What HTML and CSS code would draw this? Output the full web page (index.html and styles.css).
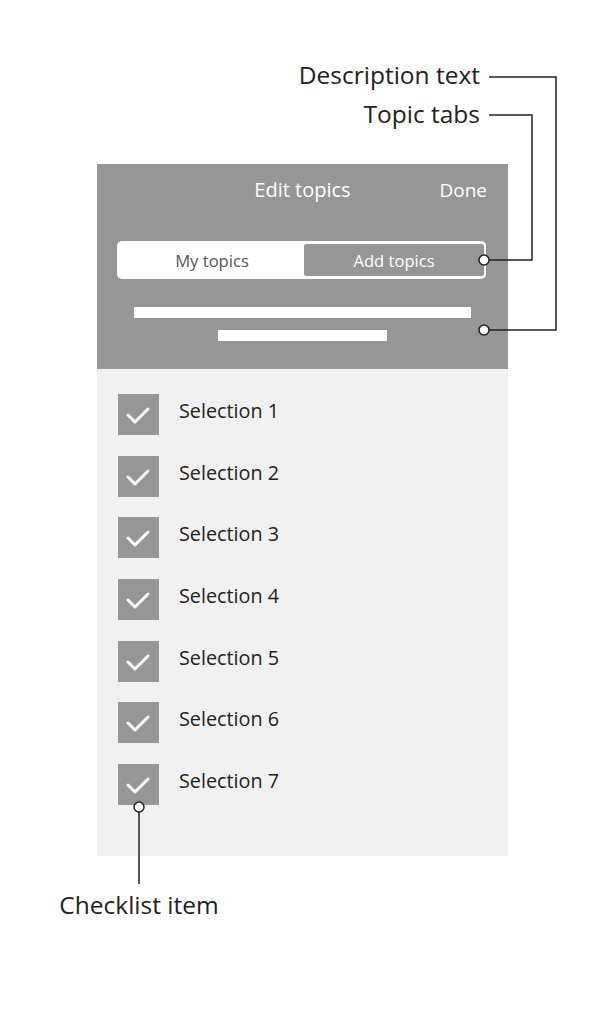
FILE: index.html
```html
<!DOCTYPE html>
<html lang="en">
<head>
<meta charset="utf-8">
<title>Edit topics</title>
<link rel="stylesheet" href="styles.css">
</head>
<body>
<div class="page">
  <div class="notes-top">
    <div class="note">Description text</div>
    <div class="note">Topic tabs</div>
  </div>

  <div class="phone">
    <div class="header">
      <div class="titlebar">
        <span></span>
        <span class="title">Edit topics</span>
        <span class="done">Done</span>
      </div>
      <div class="tabs">
        <div class="tab">My topics</div>
        <div class="tab active">Add topics</div>
      </div>
      <div class="desc">
        <div class="bar bar-long"></div>
        <div class="bar bar-short"></div>
      </div>
    </div>
    <div class="list">
      <div class="item"><span class="box"><svg viewBox="0 0 41 41"><path d="M10 21 L17 28 L30 15"/></svg></span><span class="label">Selection 1</span></div>
      <div class="item"><span class="box"><svg viewBox="0 0 41 41"><path d="M10 21 L17 28 L30 15"/></svg></span><span class="label">Selection 2</span></div>
      <div class="item"><span class="box"><svg viewBox="0 0 41 41"><path d="M10 21 L17 28 L30 15"/></svg></span><span class="label">Selection 3</span></div>
      <div class="item"><span class="box"><svg viewBox="0 0 41 41"><path d="M10 21 L17 28 L30 15"/></svg></span><span class="label">Selection 4</span></div>
      <div class="item"><span class="box"><svg viewBox="0 0 41 41"><path d="M10 21 L17 28 L30 15"/></svg></span><span class="label">Selection 5</span></div>
      <div class="item"><span class="box"><svg viewBox="0 0 41 41"><path d="M10 21 L17 28 L30 15"/></svg></span><span class="label">Selection 6</span></div>
      <div class="item"><span class="box"><svg viewBox="0 0 41 41"><path d="M10 21 L17 28 L30 15"/></svg></span><span class="label">Selection 7</span></div>
    </div>
  </div>

  <div class="note-bottom">Checklist item</div>

  <svg class="callouts" width="608" height="1018" viewBox="0 0 608 1018">
    <polyline points="489,77 556,77 556,330 489,330"/>
    <polyline points="489,115 532,115 532,260 489,260"/>
    <line x1="139" y1="812" x2="139" y2="884"/>
    <circle cx="484" cy="330" r="5"/>
    <circle cx="484" cy="260" r="5"/>
    <circle cx="139" cy="807" r="5"/>
  </svg>
</div>
</body>
</html>
```

FILE: styles.css
```css
* { box-sizing: border-box; }

html, body {
  margin: 0;
  padding: 0;
  background: #ffffff;
}

body {
  font-family: "Open Sans", "Noto Sans", "Liberation Sans", sans-serif;
  color: #222222;
}

.page {
  position: relative;
  width: 608px;
  height: 1018px;
  overflow: hidden;
}

.notes-top {
  padding-top: 59px;
  width: 480px;
  display: flex;
  flex-direction: column;
  align-items: flex-end;
  gap: 8px;
}

.note {
  font-size: 24.5px;
  line-height: 31px;
  color: #222222;
}

.phone {
  margin-top: 35px;
  margin-left: 97px;
  width: 411px;
}

.header {
  background: #969696;
  height: 205px;
}

.titlebar {
  height: 52px;
  display: grid;
  grid-template-columns: 1fr auto 1fr;
  align-items: center;
  color: #ffffff;
  padding: 0 21px;
}

.title {
  font-size: 20px;
  line-height: 52px;
}

.done {
  justify-self: end;
  font-size: 19px;
  line-height: 52px;
}

.tabs {
  margin: 25px 0 0 20px;
  width: 369px;
  height: 38px;
  background: #ffffff;
  border-radius: 5px;
  padding: 3px 2px 3px 3px;
  display: grid;
  grid-template-columns: 1fr 180px;
}

.tab {
  display: flex;
  align-items: center;
  justify-content: center;
  font-size: 16.6px;
  color: #555555;
}

.tab.active {
  background: #969696;
  color: #ffffff;
  border-radius: 2px;
}

.desc {
  margin-top: 28px;
  display: flex;
  flex-direction: column;
  align-items: center;
  gap: 12px;
}

.bar {
  height: 11px;
  background: #ffffff;
}

.bar-long { width: 337px; }
.bar-short { width: 169px; }

.list {
  background: #f1f1f1;
  height: 487px;
  padding: 25px 0 0 21px;
  display: flex;
  flex-direction: column;
  gap: 20.67px;
}

.item {
  display: flex;
  align-items: flex-start;
  gap: 20px;
  height: 41px;
}

.box {
  width: 41px;
  height: 41px;
  background: #969696;
  flex: none;
  display: block;
}

.box svg {
  display: block;
  width: 41px;
  height: 41px;
}

.box path {
  fill: none;
  stroke: #ffffff;
  stroke-width: 3;
  stroke-linecap: round;
  stroke-linejoin: round;
}

.label {
  font-size: 19.8px;
  line-height: 34px;
  color: #222222;
}

.note-bottom {
  margin-top: 33px;
  width: 278px;
  text-align: center;
  font-size: 24.5px;
  line-height: 31px;
  color: #222222;
}

.callouts {
  position: absolute;
  left: 0;
  top: 0;
  pointer-events: none;
}

.callouts polyline,
.callouts line {
  fill: none;
  stroke: #222222;
  stroke-width: 1.5;
}

.callouts circle {
  fill: #ffffff;
  stroke: #222222;
  stroke-width: 1.5;
}
```
